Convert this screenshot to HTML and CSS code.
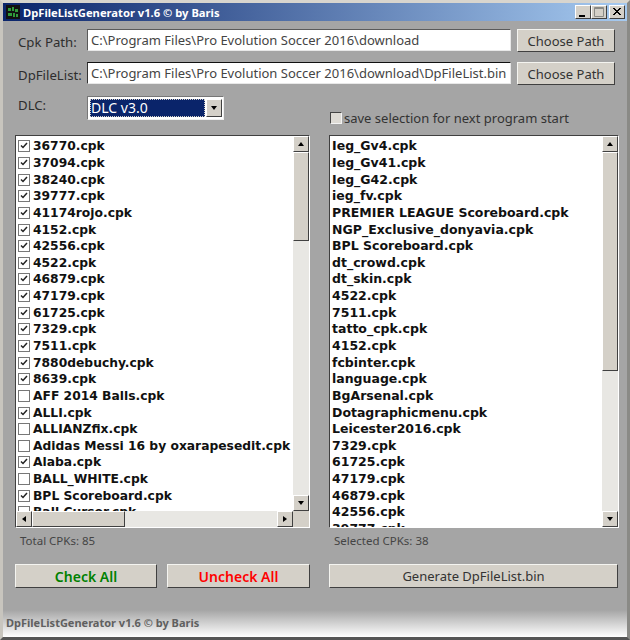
FILE: index.html
```html
<!DOCTYPE html>
<html>
<head>
<meta charset="utf-8">
<title>DpFileListGenerator</title>
<link rel="stylesheet" href="styles.css">
</head>
<body>
<div class="window">
  <div class="titlebar">
    <svg class="appicon" width="14" height="14" viewBox="0 0 14 14"><rect width="14" height="14" fill="#111"/><path d="M2 3h3v3H2zM6 2h2v4H6zM9 4h3v3H9zM2 8h4v3H2zM7 8h2v4H7zM10 9h2v3h-2z" fill="#2f9a3a"/></svg>
    <span class="title">DpFileListGenerator v1.6 © by Baris</span>
    <div class="caption">
      <span class="capbtn"><svg width="14" height="12" viewBox="0 0 14 12"><rect x="3" y="9" width="6" height="2" fill="#000"/></svg></span>
      <span class="capbtn"><svg width="14" height="12" viewBox="0 0 14 12"><path d="M2.5 1.5h9v9h-9zM2.5 2.5h9" fill="none" stroke="#8a8a86"/></svg></span>
      <span class="capbtn"><svg width="14" height="12" viewBox="0 0 14 12"><path d="M3 2l7 7M4 2l7 7M10 2l-7 7M11 2l-7 7" stroke="#000" fill="none"/></svg></span>
    </div>
  </div>
  <div class="body">
    <div class="pathrow first">
      <span class="label">Cpk Path:</span>
      <div class="input">C:\Program Files\Pro Evolution Soccer 2016\download</div>
      <button class="btn choose">Choose Path</button>
    </div>
    <div class="pathrow second">
      <span class="label">DpFileList:</span>
      <div class="input focus">C:\Program Files\Pro Evolution Soccer 2016\download\DpFileList.bin</div>
      <button class="btn choose">Choose Path</button>
    </div>
    <div class="dlcrow">
      <span class="label dlclabel">DLC:</span>
      <div class="combo"><span class="comboval">DLC v3.0</span><span class="sbtn combobtn"><i class="arrow down"></i></span></div>
      <label class="save"><span class="savebox"></span>save selection for next program start</label>
    </div>
    <div class="columns">
      <div class="col left">
        <div class="listbox">
          <div class="listmain">
            <div class="items" id="leftitems"></div>
            <div class="vscroll"><span class="sbtn"><i class="arrow up"></i></span><div class="track"><span class="thumb lthumb"></span></div><span class="sbtn"><i class="arrow down"></i></span></div>
          </div>
          <div class="hscroll"><span class="sbtn"><i class="arrow lft"></i></span><div class="htrack"><span class="hthumb"></span></div><span class="sbtn"><i class="arrow rgt"></i></span><span class="corner"></span></div>
        </div>
        <div class="count">Total CPKs: 85</div>
        <div class="btnrow">
          <button class="btn big check">Check All</button>
          <button class="btn big uncheck">Uncheck All</button>
        </div>
      </div>
      <div class="col right">
        <div class="listbox">
          <div class="listmain">
            <div class="items plain" id="rightitems"></div>
            <div class="vscroll"><span class="sbtn"><i class="arrow up"></i></span><div class="track"><span class="thumb rthumb"></span></div><span class="sbtn"><i class="arrow down"></i></span></div>
          </div>
        </div>
        <div class="count">Selected CPKs: 38</div>
        <div class="btnrow">
          <button class="btn big generate">Generate DpFileList.bin</button>
        </div>
      </div>
    </div>
  </div>
  <div class="footer">DpFileListGenerator v1.6 © by Baris</div>
</div>
<script src="app.js"></script>
</body>
</html>
```
FILE: styles.css
```css
* { box-sizing: border-box; }
html, body { margin: 0; padding: 0; }
body { width: 630px; height: 640px; overflow: hidden; background: #a5a5a5; font-family: "Noto Sans", "DejaVu Sans", sans-serif; }
.window { width: 630px; height: 640px; display: flex; flex-direction: column; background: #a5a5a5; border: 3px solid #d4d0c8; border-left-color: #c8c5be; border-right-color: #8a8a86; border-bottom-color: #555; border-top-color: #d8d5ce; }
.titlebar { height: 18px; flex: none; display: flex; align-items: center; background: linear-gradient(90deg, #0a246a, #a6caf0); padding: 0 2px 0 3px; }
.appicon { flex: none; }
.title { margin-left: 3px; color: #fff; font: bold 11.2px "Noto Sans", sans-serif; white-space: nowrap; }
.caption { margin-left: auto; display: flex; }
.capbtn { width: 16px; height: 14px; background: #d4d0c8; border: 1px solid; border-color: #fff #404040 #404040 #fff; display: flex; align-items: center; justify-content: center; overflow: hidden; }
.capbtn:last-child { margin-left: 2px; }
.capbtn svg { flex: none; }
.body { flex: 1; padding: 8px 8px 0 12px; }
.pathrow { display: flex; align-items: flex-start; height: 23px; }
.second { margin-top: 10px; }
.label { width: 72px; flex: none; padding: 4px 0 0 3px; font-size: 13.2px; color: #2e2e2e; white-space: nowrap; }
.input { width: 424px; height: 22px; flex: none; background: #fff; border: 1px solid; border-color: #5a5a5a #e8e8e8 #e8e8e8 #5a5a5a; padding: 1px 0 0 3px; font-size: 13px; color: #444; white-space: nowrap; overflow: hidden; }
.input.focus { border-color: #111 #e8e8e8 #e8e8e8 #333; }
.btn { font-family: inherit; background: #d4d0c8; border: 1px solid; border-color: #f4f4f0 #404040 #404040 #f4f4f0; padding: 0; color: #333; font-size: 13px; }
.choose { width: 98px; height: 23px; margin-left: 6px; flex: none; }
.dlcrow { display: flex; height: 39px; margin-top: 11px; }
.dlclabel { padding-top: 0; }
.combo { width: 137px; height: 24px; flex: none; background: #fff; border: 1px solid #eee; border-top-color: #777; border-left-color: #777; padding: 2px; display: flex; gap: 1px; }
.comboval { flex: 1; background: #0a246a; color: #fff; font-size: 14px; line-height: 18px; padding-left: 1px; outline: 1px dotted #d4d0c8; outline-offset: -1px; }
.sbtn { width: 16px; height: 16px; flex: none; background: #d4d0c8; border: 1px solid; border-color: #fff #404040 #404040 #fff; display: flex; align-items: center; justify-content: center; }
.combobtn { height: 18px; margin-right: -1px; }
.arrow { width: 0; height: 0; display: block; border: 0 solid transparent; }
.arrow.up { border-width: 0 3.5px 4px; border-bottom-color: #000; }
.arrow.down { border-width: 4px 3.5px 0; border-top-color: #000; }
.arrow.lft { border-width: 3.5px 4px 3.5px 0; border-right-color: #000; }
.arrow.rgt { border-width: 3.5px 0 3.5px 4px; border-left-color: #000; }
.save { margin-left: 106px; margin-top: 13px; display: flex; align-items: center; height: 18px; font-size: 13px; color: #333; white-space: nowrap; }
.savebox { width: 12px; height: 12px; background: #dedbd5; border: 1px solid; border-color: #444 #f4f4f4 #f4f4f4 #444; margin-right: 2px; }
.columns { display: flex; gap: 19px; }
.col { flex: none; }
.left { width: 295px; }
.right { width: 290px; }
.listbox { height: 393px; background: #d4d0c8; border: 1px solid; border-color: #404040 #fff #fff #404040; display: flex; flex-direction: column; }
.listmain { flex: 1; min-height: 0; display: flex; background: #fff; }
.items { flex: 1; min-width: 0; overflow: hidden; padding: 2px 0 0 2px; }
.items.plain { padding-left: 2px; }
.item { height: 16.65px; display: flex; align-items: center; font: bold 12.3px/16px "DejaVu Sans", sans-serif; color: #111; white-space: nowrap; }
.cb { width: 12px; height: 12px; flex: none; margin-right: 3px; background: #fff; border: 1px solid #777; }
.cb svg { display: block; }
.plain .item { font-size: 12.5px; }
.vscroll { width: 16px; flex: none; display: flex; flex-direction: column; background: #e8e7e3; }
.track { flex: 1; min-height: 0; display: flex; flex-direction: column; }
.thumb { display: block; background: #d4d0c8; border: 1px solid; border-color: #fff #404040 #404040 #fff; }
.lthumb { height: 89px; }
.rthumb { height: 219px; }
.hscroll { display: flex; height: 16px; flex: none; background: #e8e7e3; }
.htrack { flex: 1; }
.hthumb { display: block; width: 93px; height: 16px; background: #d4d0c8; border: 1px solid; border-color: #fff #404040 #404040 #fff; }
.corner { width: 16px; flex: none; background: #d4d0c8; }
.count { height: 36px; padding: 5px 0 0 5px; font-size: 11.5px; color: #444; }
.btnrow { display: flex; gap: 10px; }
.big { height: 24px; font-size: 13px; }
.check, .uncheck { width: 142px; font-weight: 600; font-size: 14px; }
.uncheck { width: 143px; color: #ff0000; }
.check { color: #008000; }
.generate { width: 289px; }
.footer { height: 27px; flex: none; margin-top: auto; background: linear-gradient(#a5a5a5, #ffffff); color: #606060; font: bold 11px "Noto Sans", sans-serif; padding: 5px 0 0 3px; white-space: nowrap; }
```
FILE: app.js
```js
var left = [
  ["36770.cpk",1],["37094.cpk",1],["38240.cpk",1],["39777.cpk",1],["41174rojo.cpk",1],["4152.cpk",1],["42556.cpk",1],["4522.cpk",1],["46879.cpk",1],["47179.cpk",1],["61725.cpk",1],["7329.cpk",1],["7511.cpk",1],["7880debuchy.cpk",1],["8639.cpk",1],["AFF 2014 Balls.cpk",0],["ALLI.cpk",1],["ALLIANZfix.cpk",0],["Adidas Messi 16 by oxarapesedit.cpk",0],["Alaba.cpk",1],["BALL_WHITE.cpk",0],["BPL Scoreboard.cpk",1],["Ball Cursor.cpk",0]
];
var right = ["Ieg_Gv4.cpk","Ieg_Gv41.cpk","Ieg_G42.cpk","ieg_fv.cpk","PREMIER LEAGUE Scoreboard.cpk","NGP_Exclusive_donyavia.cpk","BPL Scoreboard.cpk","dt_crowd.cpk","dt_skin.cpk","4522.cpk","7511.cpk","tatto_cpk.cpk","4152.cpk","fcbinter.cpk","language.cpk","BgArsenal.cpk","Dotagraphicmenu.cpk","Leicester2016.cpk","7329.cpk","61725.cpk","47179.cpk","46879.cpk","42556.cpk","39777.cpk"];
var tick = '<svg width="10" height="10" viewBox="0 0 10 10"><path d="M2 4.5l2 2 4-4.5" fill="none" stroke="#222" stroke-width="1.5"/></svg>';
function row(text, mark) {
  var d = document.createElement("div");
  d.className = "item";
  if (mark !== null) {
    var c = document.createElement("span");
    c.className = "cb";
    if (mark) c.innerHTML = tick;
    d.appendChild(c);
  }
  d.appendChild(document.createTextNode(text));
  return d;
}
var l = document.getElementById("leftitems");
left.forEach(function (x) { l.appendChild(row(x[0], x[1])); });
var r = document.getElementById("rightitems");
right.forEach(function (x) { r.appendChild(row(x, null)); });
```
